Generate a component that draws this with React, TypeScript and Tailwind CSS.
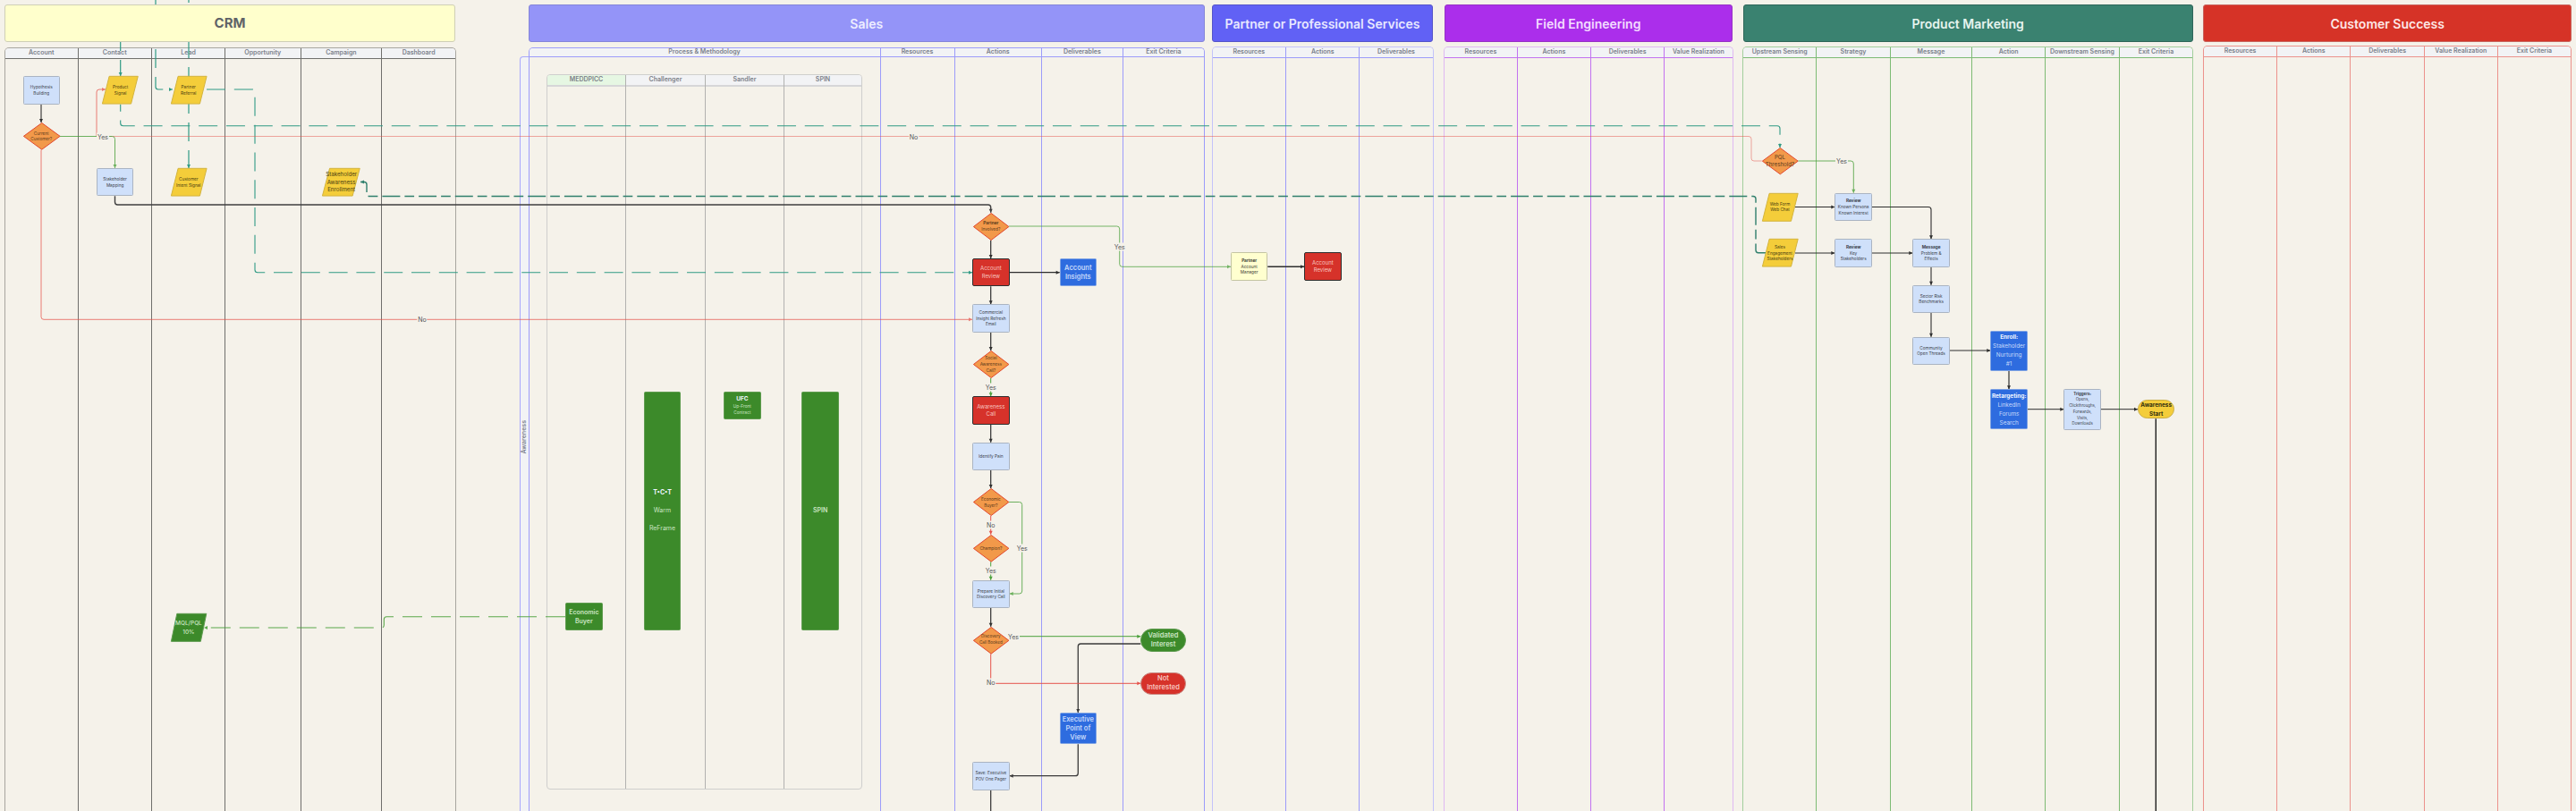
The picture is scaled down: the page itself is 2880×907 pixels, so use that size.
import React from "react";

type Pt = [number, number];

type Edge = {
  pts: Pt[];
  color: string;
  w?: number;
  op?: number;
  dash?: string;
  offset?: number;
  arrow?: boolean;
};

type Col = { label: string; w: string };

type Kind = "box" | "pale" | "red" | "blue" | "green" | "diamond" | "para" | "paraGreen" | "pillGreen" | "pillRed" | "pillYellow";

type Flow = {
  pos: string;
  kind: Kind;
  title?: string;
  lines: string[];
  text?: string;
};

const TEAL = "#2f9a84";
const DARK_TEAL = "#2f7f6c";
const RED = "#e5534b";
const GREEN = "#4aa03a";
const INK = "#2e2e2e";

// rounded orthogonal path through the given points
function toPath(pts: Pt[], r = 3) {
  let d = `M${pts[0][0]} ${pts[0][1]}`;
  for (let i = 1; i < pts.length - 1; i++) {
    const [px, py] = pts[i - 1];
    const [x, y] = pts[i];
    const [nx, ny] = pts[i + 1];
    const inLen = Math.hypot(x - px, y - py);
    const outLen = Math.hypot(nx - x, ny - y);
    const a = Math.min(r, inLen / 2);
    const b = Math.min(r, outLen / 2);
    d += ` L${x - ((x - px) / inLen) * a} ${y - ((y - py) / inLen) * a}`;
    d += ` Q${x} ${y} ${x + ((nx - x) / outLen) * b} ${y + ((ny - y) / outLen) * b}`;
  }
  const last = pts[pts.length - 1];
  return `${d} L${last[0]} ${last[1]}`;
}

function arrowHead(pts: Pt[]) {
  const [x, y] = pts[pts.length - 1];
  const [px, py] = pts[pts.length - 2];
  const len = Math.hypot(x - px, y - py);
  const ux = (x - px) / len;
  const uy = (y - py) / len;
  const bx = x - ux * 4;
  const by = y - uy * 4;
  return `${x},${y} ${bx - uy * 2},${by + ux * 2} ${bx + uy * 2},${by - ux * 2}`;
}

const edges: Edge[] = [
  // long teal dashes
  { pts: [[134.7, 36], [134.7, 85]], color: TEAL, w: 1.2, dash: "21 10", arrow: true },
  { pts: [[174, -7], [174, 100], [193, 100]], color: TEAL, w: 1.2, dash: "21 10", arrow: true },
  { pts: [[211, -18], [211, 188]], color: TEAL, w: 1.2, dash: "21 10", arrow: true },
  { pts: [[134.7, 116.7], [134.7, 140.7], [1990, 140.7], [1990, 165]], color: TEAL, w: 1.1, dash: "21 9.8", offset: 13, arrow: true },
  { pts: [[231, 100], [285, 100], [285, 304.7], [1087, 304.7]], color: TEAL, w: 1.1, dash: "21 9.8", arrow: true },
  { pts: [[1974, 282.7], [1963, 282.7], [1963, 219.5], [410, 219.5], [410, 203.5], [403, 203.5]], color: DARK_TEAL, w: 1.4, dash: "20 5 10.7 5", arrow: true },
  { pts: [[632, 689.7], [429.3, 689.7], [429.3, 702], [228, 702]], color: GREEN, w: 1.1, op: 0.9, dash: "22 10", arrow: true },

  // no / yes branches out of the first decision
  { pts: [[108, 152.5], [1958, 152.5], [1958, 180], [1969.7, 180]], color: RED, w: 1, op: 0.5 },
  { pts: [[108, 152.5], [108, 100], [118, 100]], color: RED, w: 1, op: 0.75, arrow: true },
  { pts: [[46, 167.7], [46, 357.3], [1087, 357.3]], color: RED, w: 1, op: 0.75, arrow: true },
  { pts: [[67, 152.5], [128.5, 152.5], [128.5, 188]], color: GREEN, w: 1, op: 0.8, arrow: true },

  // black flow through crm and sales
  { pts: [[46, 116.7], [46, 137]], color: INK, w: 1.1, arrow: true },
  { pts: [[128.5, 219.3], [128.5, 229], [1107.7, 229], [1107.7, 237.7]], color: "#3f3f3f", w: 1.4, arrow: true },
  { pts: [[1107.7, 268.7], [1107.7, 289]], color: INK, w: 1.2, arrow: true },
  { pts: [[1128.7, 304.7], [1184.7, 304.7]], color: INK, w: 1.3, arrow: true },
  { pts: [[1107.7, 320.3], [1107.7, 340.3]], color: INK, w: 1.2, arrow: true },
  { pts: [[1107.7, 371.7], [1107.7, 392]], color: INK, w: 1.2, arrow: true },
  { pts: [[1107.7, 474.7], [1107.7, 494.7]], color: INK, w: 1.2, arrow: true },
  { pts: [[1107.7, 525.7], [1107.7, 546]], color: INK, w: 1.2, arrow: true },
  { pts: [[1107.7, 680], [1107.7, 700.7]], color: INK, w: 1.2, arrow: true },
  { pts: [[1107.7, 883.7], [1107.7, 910]], color: INK, w: 1.2 },
  { pts: [[1417.3, 298.3], [1458, 298.3]], color: INK, w: 1.4, arrow: true },
  { pts: [[1275.3, 720], [1205.3, 720], [1205.3, 797]], color: "#3a3a3a", w: 1.3, arrow: true },
  { pts: [[1205.3, 832.3], [1205.3, 867.7], [1128.7, 867.7]], color: "#3a3a3a", w: 1.3, arrow: true },

  // sales decisions
  { pts: [[1128, 253], [1251.7, 253], [1251.7, 298.3], [1376, 298.3]], color: GREEN, w: 1, op: 0.75, arrow: true },
  { pts: [[1107.7, 423], [1107.7, 443.3]], color: GREEN, w: 1, arrow: true },
  { pts: [[1107.7, 577], [1107.7, 597.7]], color: RED, w: 1, arrow: true },
  { pts: [[1128, 561.5], [1142.7, 561.5], [1142.7, 664], [1128.7, 664]], color: GREEN, w: 1, op: 0.8, arrow: true },
  { pts: [[1107.7, 628.3], [1107.7, 648.7]], color: GREEN, w: 1, arrow: true },
  { pts: [[1128, 711.7], [1275.3, 711.7]], color: GREEN, w: 1, arrow: true },
  { pts: [[1107.7, 731.3], [1107.7, 764.3], [1275.3, 764.3]], color: RED, w: 1, arrow: true },

  // product marketing
  { pts: [[2010.3, 180], [2072.3, 180], [2072.3, 215.7]], color: GREEN, w: 1, op: 0.8, arrow: true },
  { pts: [[2007, 231.5], [2051.3, 231.5]], color: INK, w: 1, arrow: true },
  { pts: [[2093, 231.5], [2159, 231.5], [2159, 267.3]], color: INK, w: 1.1, arrow: true },
  { pts: [[2007, 283], [2051.3, 283]], color: INK, w: 1.1, arrow: true },
  { pts: [[2093, 283], [2138.3, 283]], color: INK, w: 1.1, arrow: true },
  { pts: [[2159, 298.7], [2159, 318.7]], color: INK, w: 1.1, arrow: true },
  { pts: [[2159, 350], [2159, 376.7]], color: INK, w: 1.1, arrow: true },
  { pts: [[2179.7, 392], [2225.3, 392]], color: INK, w: 1, arrow: true },
  { pts: [[2246, 414.7], [2246, 435.3]], color: INK, w: 1.2, arrow: true },
  { pts: [[2267, 457.7], [2307.3, 457.7]], color: INK, w: 1, arrow: true },
  { pts: [[2349, 457.7], [2390, 457.7]], color: INK, w: 1, arrow: true },
  { pts: [[2410.3, 468.3], [2410.3, 910]], color: "#1f1f1f", w: 1.4 },
];

const labels = [
  { text: "Yes", pos: "left-[115px] top-[152.5px]" },
  { text: "No", pos: "left-[1021.5px] top-[152.5px]" },
  { text: "No", pos: "left-[472px] top-[357px]" },
  { text: "Yes", pos: "left-[1251.7px] top-[276px]" },
  { text: "Yes", pos: "left-[1107.7px] top-[432.7px]" },
  { text: "No", pos: "left-[1107.7px] top-[587.3px]" },
  { text: "Yes", pos: "left-[1142.7px] top-[612.7px]" },
  { text: "Yes", pos: "left-[1107.7px] top-[638.3px]" },
  { text: "Yes", pos: "left-[1133px] top-[711.7px]" },
  { text: "No", pos: "left-[1107.7px] top-[763px]" },
  { text: "Yes", pos: "left-[2059px] top-[180px]" },
];

const flows: Flow[] = [
  // crm
  { pos: "left-[25.5px] top-[85.3px] w-[41.5px] h-[31.4px]", kind: "box", lines: ["Hypothesis", "Building"] },
  { pos: "left-[25.5px] top-[137px] w-[41.5px] h-[30.7px]", kind: "diamond", lines: ["Current", "Customer?"] },
  { pos: "left-[114.3px] top-[85.3px] w-[40.7px] h-[31.4px]", kind: "para", lines: ["Product", "Signal"] },
  { pos: "left-[190.5px] top-[85.3px] w-[40.5px] h-[31.4px]", kind: "para", lines: ["Partner", "Referral"] },
  { pos: "left-[107.7px] top-[188px] w-[41.8px] h-[31.4px]", kind: "box", lines: ["Stakeholder", "Mapping"] },
  { pos: "left-[190.5px] top-[188px] w-[40.5px] h-[31.4px]", kind: "para", lines: ["Customer", "Intent Signal"] },
  { pos: "left-[360.3px] top-[188px] w-[42.7px] h-[31.4px]", kind: "para", lines: ["Stakeholder", "Awareness", "Enrollment"], text: "text-[6.2px] leading-[8.3px]" },
  { pos: "left-[190.8px] top-[686.3px] w-[40.2px] h-[31.7px]", kind: "paraGreen", lines: ["MQL/PQL", "10%"] },

  // methodology
  { pos: "left-[632px] top-[674px] w-[41.7px] h-[31.3px]", kind: "green", lines: ["Economic", "Buyer"] },
  { pos: "left-[719.7px] top-[437.7px] w-[41.6px] h-[267.6px]", kind: "green", title: "T•C•T", lines: ["\u00A0", "Warm", "\u00A0", "ReFrame"], text: "text-[7px] leading-[10px]" },
  { pos: "left-[809px] top-[437.7px] w-[41.7px] h-[31.6px]", kind: "green", title: "UFC", lines: ["Up-Front", "Contract"], text: "text-[4.7px] leading-[6.7px]" },
  { pos: "left-[896.3px] top-[437.7px] w-[41.7px] h-[267.6px]", kind: "green", lines: ["SPIN"] },

  // sales actions
  { pos: "left-[1087.7px] top-[237.7px] w-[40.3px] h-[31px]", kind: "diamond", title: "Partner", lines: ["Involved?"] },
  { pos: "left-[1087px] top-[289px] w-[41.7px] h-[31.3px]", kind: "red", lines: ["Account", "Review"] },
  { pos: "left-[1184.7px] top-[289px] w-[41.3px] h-[31.3px]", kind: "blue", lines: ["Account", "Insights"] },
  { pos: "left-[1087px] top-[340.3px] w-[41.7px] h-[31.4px]", kind: "box", lines: ["Commercial", "Insight Refresh", "Email"] },
  { pos: "left-[1087.7px] top-[392px] w-[40.3px] h-[31px]", kind: "diamond", lines: ["Social", "Awareness", "Call?"] },
  { pos: "left-[1087px] top-[443.3px] w-[41.7px] h-[31.4px]", kind: "red", lines: ["Awareness", "Call"] },
  { pos: "left-[1087px] top-[494.7px] w-[41.7px] h-[31px]", kind: "box", lines: ["Identify Pain"] },
  { pos: "left-[1087.7px] top-[546px] w-[40.3px] h-[31px]", kind: "diamond", lines: ["Economic", "Buyer?"] },
  { pos: "left-[1087.7px] top-[597.7px] w-[40.3px] h-[30.6px]", kind: "diamond", lines: ["Champion?"] },
  { pos: "left-[1087px] top-[648.7px] w-[41.7px] h-[31.3px]", kind: "box", lines: ["Prepare Initial", "Discovery Call"] },
  { pos: "left-[1087.7px] top-[700.7px] w-[40.3px] h-[30.6px]", kind: "diamond", lines: ["Discovery", "Call Booked"], text: "text-[4.6px] leading-[6.7px]" },
  { pos: "left-[1275.3px] top-[703px] w-[50.4px] h-[25.7px]", kind: "pillGreen", lines: ["Validated", "Interest"] },
  { pos: "left-[1275.3px] top-[751.7px] w-[50.4px] h-[25.6px]", kind: "pillRed", lines: ["Not", "Interested"] },
  { pos: "left-[1184.7px] top-[797px] w-[41.3px] h-[35.3px]", kind: "blue", lines: ["Executive", "Point of", "View"] },
  { pos: "left-[1087px] top-[852.3px] w-[41.7px] h-[31.4px]", kind: "box", lines: ["Save: Executive", "POV One Pager"] },

  // partner
  { pos: "left-[1376px] top-[282.3px] w-[41.3px] h-[31.7px]", kind: "pale", title: "Partner", lines: ["Account", "Manager"] },
  { pos: "left-[1458px] top-[282.3px] w-[41.7px] h-[31.7px]", kind: "red", lines: ["Account", "Review"] },

  // product marketing
  { pos: "left-[1969.7px] top-[165px] w-[40.6px] h-[30.3px]", kind: "diamond", lines: ["PQL", "Threshold?"], text: "text-[6.2px] leading-[8.3px]" },
  { pos: "left-[1969.7px] top-[215.7px] w-[40.6px] h-[31.6px]", kind: "para", lines: ["Web Form", "Web Chat"] },
  { pos: "left-[1969.7px] top-[267.3px] w-[40.6px] h-[31.4px]", kind: "para", lines: ["Sales", "Engagement", "Stakeholders"] },
  { pos: "left-[2051.3px] top-[215.7px] w-[41.7px] h-[31.6px]", kind: "box", title: "Review", lines: ["Known Persona", "Known Interest"] },
  { pos: "left-[2051.3px] top-[267.3px] w-[41.7px] h-[31.4px]", kind: "box", title: "Review", lines: ["Key", "Stakeholders"] },
  { pos: "left-[2138.3px] top-[267.3px] w-[41.7px] h-[31.4px]", kind: "box", title: "Message", lines: ["Problem &", "Effects"] },
  { pos: "left-[2138.3px] top-[318.7px] w-[41.7px] h-[31.3px]", kind: "box", lines: ["Sector Risk", "Benchmarks"] },
  { pos: "left-[2138.3px] top-[376.7px] w-[41.4px] h-[31.3px]", kind: "box", lines: ["Community", "Open Threads"] },
  { pos: "left-[2225.3px] top-[370px] w-[41.7px] h-[44.7px]", kind: "blue", title: "Enroll:", lines: ["Stakeholder", "Nurturing", "#1"], text: "text-[6.4px] leading-[10px]" },
  { pos: "left-[2225.3px] top-[435.3px] w-[41.7px] h-[45px]", kind: "blue", title: "Retargeting:", lines: ["LinkedIn", "Forums", "Search"], text: "text-[6.4px] leading-[10px]" },
  { pos: "left-[2307.3px] top-[435px] w-[41.7px] h-[45.7px]", kind: "box", title: "Triggers:", lines: ["Opens,", "Clickthroughs,", "Forwards,", "Visits,", "Downloads"], text: "text-[4.4px] leading-[6.7px]" },
  { pos: "left-[2390px] top-[447.3px] w-[41.3px] h-[21px]", kind: "pillYellow", lines: ["Awareness", "Start"] },
];

const kindClass: Record<Kind, string> = {
  box: "bg-[#cfe0fa] border border-[#aab4c2] rounded-[1.5px] text-[#3a3f4a]",
  pale: "bg-[#ffffcf] border border-[#c4c4a2] rounded-[1.5px] text-[#3a3a32]",
  red: "bg-[#d6322a] border-[1.5px] border-[#2e2e2e] rounded-[2px] text-[#f7c4bf]",
  blue: "bg-[#2e6cdf] border border-[#7fa3e3] rounded-[1.5px] text-[#c5d9fb]",
  green: "bg-[#3c8a2a] border border-[#5f9c50] rounded-[1.5px] text-[#cbe5c3]",
  diamond: "text-[#5a3a1c]",
  para: "text-[#4a3d10]",
  paraGreen: "text-[#cbe5c3]",
  pillGreen: "bg-[#3c8a2a] border border-[#5f9c50] rounded-full text-[#cbe5c3]",
  pillRed: "bg-[#d6322a] border border-[#c98b84] rounded-full text-[#f7c4bf]",
  pillYellow: "bg-[#f4cd3a] border border-[#c9ad45] rounded-full text-[#33300f]",
};

const kindSize: Record<Kind, string> = {
  box: "text-[4.7px] leading-[6.7px]",
  pale: "text-[4.7px] leading-[6.7px]",
  red: "text-[6px] leading-[8.3px]",
  blue: "text-[7.5px] font-semibold leading-[10px]",
  green: "text-[7px] font-semibold leading-[10px]",
  diamond: "text-[4.7px] leading-[6.7px]",
  para: "text-[4.7px] leading-[6.7px]",
  paraGreen: "text-[6.5px] font-medium leading-[10px]",
  pillGreen: "text-[7.5px] font-semibold leading-[10px]",
  pillRed: "text-[7.5px] font-semibold leading-[10px]",
  pillYellow: "text-[6.4px] font-bold leading-[10px]",
};

const shapes: Partial<Record<Kind, { points: string; fill: string; stroke: string }>> = {
  diamond: { points: "50,1.5 99,50 50,98.5 1,50", fill: "#f2994a", stroke: "#e2492f" },
  para: { points: "20,1 99,1 80,99 1,99", fill: "#f4cd3a", stroke: "#d3b43f" },
  paraGreen: { points: "17,1 99,1 83,99 1,99", fill: "#3c8a2a", stroke: "#5f9c50" },
};

function FlowNode({ node }: { node: Flow }) {
  const shape = shapes[node.kind];
  const onDark = node.kind === "blue" || node.kind === "green";
  return (
    <div className={`absolute flex flex-col items-center justify-center text-center whitespace-nowrap ${node.pos} ${kindClass[node.kind]} ${node.text ?? kindSize[node.kind]}`}>
      {shape && (
        <svg viewBox="0 0 100 100" preserveAspectRatio="none" className="absolute inset-0 w-full h-full overflow-visible">
          <polygon points={shape.points} fill={shape.fill} stroke={shape.stroke} strokeWidth={1} strokeLinejoin="round" vectorEffect="non-scaling-stroke" />
        </svg>
      )}
      {node.title && (
        <span className={`relative font-bold ${node.title === "UFC" ? "text-[6.5px] leading-[9px]" : ""} ${onDark ? "text-[#eef5ff]" : ""}`}>
          {node.title}
        </span>
      )}
      {node.lines.map((line, i) => (
        <span key={i} className="relative">{line}</span>
      ))}
    </div>
  );
}

function Lane({ className, line, head, cols }: { className: string; line: string; head: string; cols: Col[] }) {
  return (
    <div className={`flex shrink-0 h-[860px] overflow-hidden rounded-t-[5px] border-x border-t ${className}`}>
      {cols.map((col) => (
        <div key={col.label} className={`flex flex-col h-full ${col.w} ${line} border-r last:border-r-0`}>
          <div className={`flex items-center justify-center shrink-0 bg-[#f2f3f5] border-b text-[7px] font-semibold text-[#7b818c] whitespace-nowrap ${head} ${line}`}>
            {col.label}
          </div>
        </div>
      ))}
    </div>
  );
}

function Banner({ className, title }: { className: string; title: string }) {
  return (
    <div className={`flex items-center justify-center shrink-0 h-[42px] rounded-[3px] border ${className}`}>
      {title}
    </div>
  );
}

const subCols = [
  { label: "MEDDPICC", tone: "bg-[#e6f7e3]", w: "w-[88px]" },
  { label: "Challenger", tone: "bg-[#f2f3f5]", w: "w-[89px]" },
  { label: "Sandler", tone: "bg-[#f2f3f5]", w: "w-[88px]" },
  { label: "SPIN", tone: "bg-[#f2f3f5]", w: "flex-1" },
];

export default function App() {
  return (
    <div className="relative w-[2880px] h-[907px] overflow-hidden bg-[#f5f2ea] font-['Inter',sans-serif]">
      {/* swimlane tables */}
      <div className="absolute inset-0 flex items-start pl-[5px] pt-[51px]">
        <Lane
          className="w-[505px] mt-[2px] border-[#a8a69f]"
          line="border-[#6f6f6c]"
          head="h-[12px]"
          cols={[
            { label: "Account", w: "w-[81.5px]" },
            { label: "Contact", w: "w-[82.5px]" },
            { label: "Lead", w: "w-[82px]" },
            { label: "Opportunity", w: "w-[84.5px]" },
            { label: "Campaign", w: "w-[90.7px]" },
            { label: "Dashboard", w: "flex-1" },
          ]}
        />

        <div className="flex shrink-0 ml-[70.5px] mt-[12px] w-[11px] h-[850px] items-center justify-center rounded-tl-[4px] border-l border-t border-[#a9a9fb] bg-[#f2f3f5]">
          <span className="[writing-mode:vertical-rl] rotate-180 text-[7px] font-semibold text-[#7b818c]">Awareness</span>
        </div>

        <Lane
          className="relative w-[756.5px] -ml-px mt-[1.5px] border-[#9c9cfa]"
          line="border-[#9c9cfa]"
          head="h-[10.5px]"
          cols={[
            { label: "Process & Methodology", w: "w-[393px]" },
            { label: "Resources", w: "w-[83px]" },
            { label: "Actions", w: "w-[97.5px]" },
            { label: "Deliverables", w: "w-[90.7px]" },
            { label: "Exit Criteria", w: "flex-1" },
          ]}
        />

        <Lane
          className="w-[248px] ml-[7.5px] mt-[0.5px] border-[#c3c3fa]"
          line="border-[#9c9cfa]"
          head="h-[12px]"
          cols={[
            { label: "Resources", w: "w-[82.7px]" },
            { label: "Actions", w: "w-[82.3px]" },
            { label: "Deliverables", w: "flex-1" },
          ]}
        />
        <Lane
          className="w-[323.5px] ml-[11.5px] mt-[0.5px] border-[#dfb8f2]"
          line="border-[#c272f0]"
          head="h-[12px]"
          cols={[
            { label: "Resources", w: "w-[81.8px]" },
            { label: "Actions", w: "w-[82.2px]" },
            { label: "Deliverables", w: "w-[82.3px]" },
            { label: "Value Realization", w: "flex-1" },
          ]}
        />
        <Lane
          className="w-[504px] ml-[10.7px] mt-[0.5px] border-[#a3cf9c]"
          line="border-[#7dbb74]"
          head="h-[12px]"
          cols={[
            { label: "Upstream Sensing", w: "w-[82px]" },
            { label: "Strategy", w: "w-[82.6px]" },
            { label: "Message", w: "w-[91.4px]" },
            { label: "Action", w: "w-[82px]" },
            { label: "Downstream Sensing", w: "w-[82.6px]" },
            { label: "Exit Criteria", w: "flex-1" },
          ]}
        />
        <Lane
          className="w-[412px] ml-[10.8px] border-[#ec928c]"
          line="border-[#ec928c]"
          head="h-[12px]"
          cols={[
            { label: "Resources", w: "w-[82.2px]" },
            { label: "Actions", w: "w-[82.3px]" },
            { label: "Deliverables", w: "w-[82.3px]" },
            { label: "Value Realization", w: "w-[82px]" },
            { label: "Exit Criteria", w: "flex-1" },
          ]}
        />
      </div>

      {/* methodology sub table inside the sales lane */}
      <div className="absolute left-[611px] top-[83px] w-[353px] h-[800px] flex overflow-hidden rounded-[4px] border border-[#cfcfcd]">
        {subCols.map((col) => (
          <div key={col.label} className={`flex flex-col h-full ${col.w} border-r border-[#b2b2b0] last:border-r-0`}>
            <div className={`flex items-center justify-center h-[13px] shrink-0 border-b-2 border-[#d6d6d8] text-[7px] font-semibold text-[#7b8088] ${col.tone}`}>
              {col.label}
            </div>
          </div>
        ))}
      </div>

      {/* connectors */}
      <svg viewBox="0 0 2880 907" className="absolute inset-0 w-[2880px] h-[907px] pointer-events-none" fill="none">
        {edges.map((edge, i) => (
          <g key={i} opacity={edge.op ?? 1}>
            <path
              d={toPath(edge.pts)}
              stroke={edge.color}
              strokeWidth={edge.w ?? 1}
              strokeDasharray={edge.dash}
              strokeDashoffset={edge.offset}
            />
            {edge.arrow && <polygon points={arrowHead(edge.pts)} fill={edge.color} />}
          </g>
        ))}
      </svg>

      {labels.map((label) => (
        <span
          key={label.pos}
          className={`absolute -translate-x-1/2 -translate-y-1/2 bg-[#f5f2ea] px-px text-[7px] leading-[9px] text-[#55565a] ${label.pos}`}
        >
          {label.text}
        </span>
      ))}

      {flows.map((node) => (
        <FlowNode key={node.pos} node={node} />
      ))}

      {/* department banners */}
      <div className="absolute inset-x-0 top-[5px] flex pl-[5px] text-[14px] font-semibold">
        <Banner className="w-[504px] bg-[#ffffcc] border-[#cfcfb6] text-[#5f6368] text-[15px] font-bold" title="CRM" />
        <Banner className="w-[755.5px] ml-[82px] bg-[#9494f8] border-[#8585d8] text-[#eeeeff]" title="Sales" />
        <Banner className="w-[247px] ml-[8.5px] bg-[#6161f5] border-[#5555c8] text-[#e8e8ff]" title="Partner or Professional Services" />
        <Banner className="w-[322.5px] ml-[12.5px] bg-[#ab2eeb] border-[#9633c4] text-[#f3dcff]" title="Field Engineering" />
        <Banner className="w-[503px] ml-[11.7px] bg-[#3a8270] border-[#2f6659] text-[#e6f4ef]" title="Product Marketing" />
        <Banner className="w-[411.5px] ml-[11.8px] bg-[#d63327] border-[#c8655e] text-[#fde8e6]" title="Customer Success" />
      </div>
    </div>
  );
}
